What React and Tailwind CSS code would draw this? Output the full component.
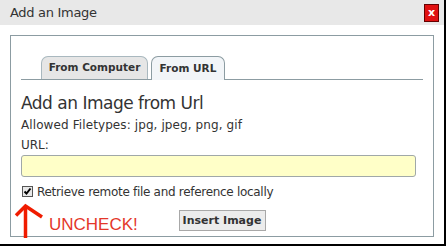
export default function App() {
  return (
    <div className="w-[446px] h-[247px] bg-white relative overflow-hidden" style={{ fontFamily: '"DejaVu Sans", sans-serif' }}>
      <div className="border-r-2 border-b-2 border-black h-[246px] flex flex-col">
        {/* title bar */}
        <div className="h-[25px] bg-[#e8e8e8] flex items-center justify-between pl-[10px] pr-[5px]">
          <span className="text-[13px] text-[#333] tracking-[-0.3px]">Add an Image</span>
          <span className="w-[15px] h-[18px] bg-[#e01010] border border-[#600] text-white text-[11px] font-bold flex items-center justify-center leading-none">x</span>
        </div>

        <div className="px-[10px] pt-[10px]">
          <div className="border border-[#8c9ca2] h-[202px] px-[10px]">
            {/* tabs */}
            <div className="flex items-end gap-[3px] pl-[20px] mt-[20px] border-b border-[#8c9ca2] h-[24px]">
              <div className="w-[107px] h-[23px] bg-[#e6e6e6] border border-b-0 border-[#a9b8bf] rounded-t-[7px] text-[10.5px] font-bold text-[#333] flex items-center justify-center">From Computer</div>
              <div className="w-[74px] h-[24px] bg-[#f2f5f8] border border-b-0 border-[#8c9ca2] rounded-t-[7px] text-[10.5px] font-bold text-[#333] flex items-center justify-center -mb-px">From URL</div>
            </div>

            <div className="text-[17px] text-[#333] mt-[13px] leading-[21px] tracking-[-0.5px]">Add an Image from Url</div>
            <div className="text-[12px] text-[#333] mt-[4px] leading-[15px] tracking-[0.1px]">Allowed Filetypes: jpg, jpeg, png, gif</div>
            <div className="text-[12px] text-[#333] mt-[5px] leading-[15px]">URL:</div>
            <div className="mt-[2px] w-[395px] h-[22px] bg-[#ffffc8] border border-[#a0a8a8] rounded-[3px]"></div>
            <label className="flex items-center mt-[8px] h-[13px]">
              <span className="w-[11px] h-[11px] ml-[1px] border border-[#555] bg-[#e8e8e8] flex items-center justify-center">
                <svg width="9" height="9" viewBox="0 0 9 9"><path d="M1.5 4.5 L3.5 6.5 L7.5 1.5" stroke="#000" strokeWidth="2" fill="none" /></svg>
              </span>
              <span className="text-[12px] text-[#333] ml-[4px] tracking-[-0.3px]">Retrieve remote file and reference locally</span>
            </label>
            <div className="flex justify-center mt-[12px]">
              <button className="w-[87px] h-[21px] bg-[#ececec] border border-[#a8a8a8] text-[11px] font-bold text-[#333] leading-none">Insert Image</button>
            </div>
          </div>
        </div>
      </div>

      {/* annotation */}
      <svg className="absolute left-0 top-0" width="60" height="247" viewBox="0 0 60 247">
        <path d="M25.5 207 L25.5 238" stroke="#f01c00" strokeWidth="3.5" fill="none" />
        <path d="M16 215.5 L25.5 206 L42 217" stroke="#f01c00" strokeWidth="3.5" fill="none" strokeLinejoin="miter" />
      </svg>
      <span className="absolute left-[49px] top-[216px] text-[17px] text-[#e4372a] leading-none" style={{ fontFamily: '"Liberation Sans", sans-serif' }}>UNCHECK!</span>
    </div>
  );
}
